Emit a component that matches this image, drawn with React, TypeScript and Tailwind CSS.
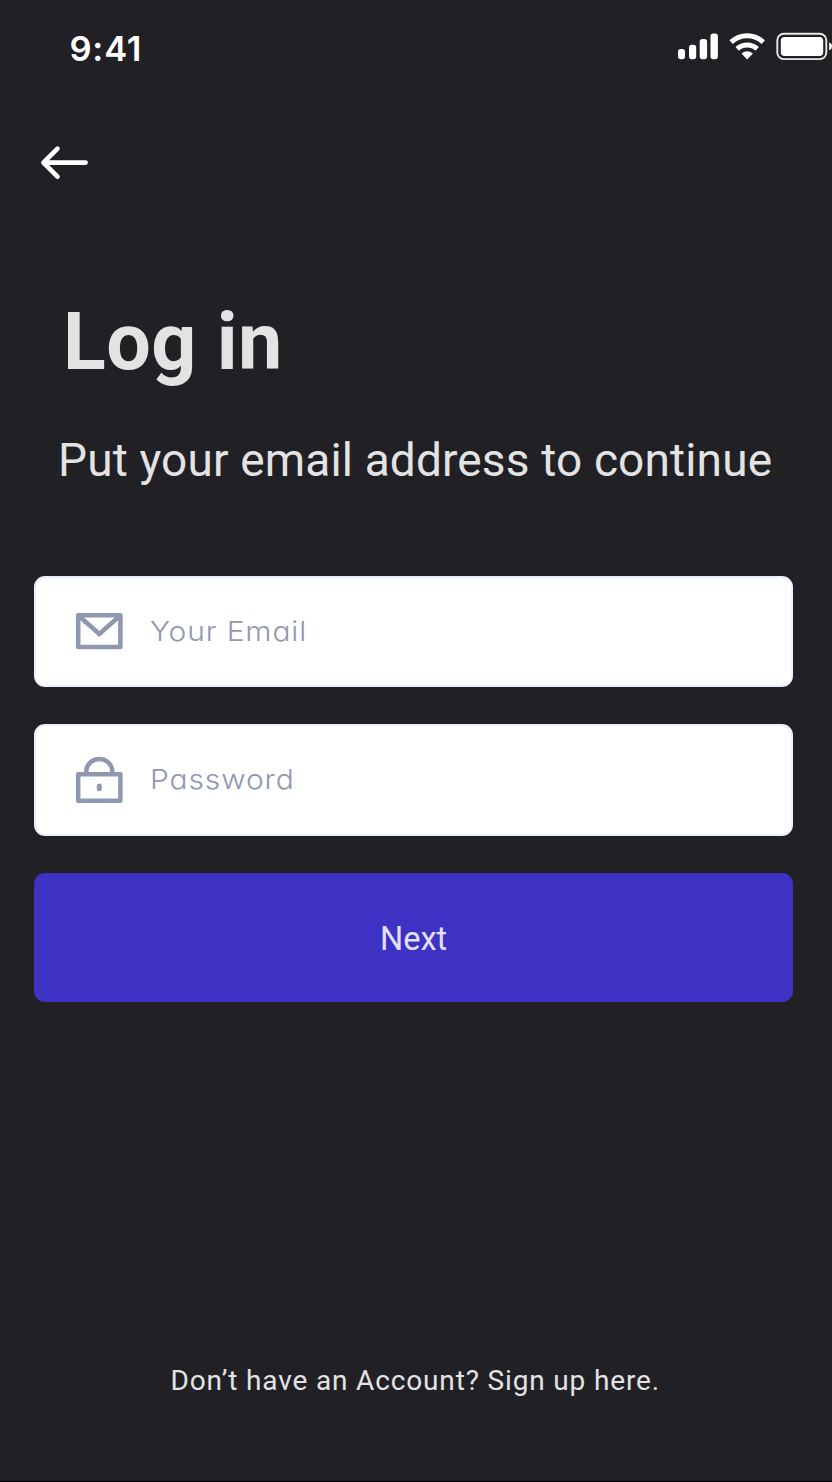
function StatusBar() {
  return (
    <header className="flex h-[96px] shrink-0 items-start justify-between overflow-hidden pl-[69.5px]">
      <time className="mt-[29px] font-['Inter',sans-serif] text-[34.5px] leading-[40px] font-semibold tracking-[0.8px] text-white">9:41</time>
      <div className="mt-[30px] flex">
        <svg className="mr-[10px] h-[32px] w-[42px]" viewBox="0 0 42 32" fill="white" aria-label="Signal">
          <rect x="1" y="19" width="7" height="10.3" rx="2.8" />
          <rect x="12" y="14.8" width="7.2" height="14.5" rx="2.8" />
          <rect x="22.7" y="9" width="7.4" height="20.3" rx="2.8" />
          <rect x="33.5" y="3.6" width="7.4" height="25.7" rx="2.8" />
        </svg>
        <svg className="mr-[10px] h-[32px] w-[37px]" viewBox="0 0 37 32" aria-label="Wi-Fi">
          <g fill="none" stroke="white" strokeWidth="5">
            <path d="M2.1 12.2A23.6 23.6 0 0 1 34.3 12.2" />
            <path d="M8.2 18.8A14.8 14.8 0 0 1 28.2 18.8" />
          </g>
          <path d="M12.5 23.6Q18.2 19 23.9 23.6L18.2 29.5Z" fill="white" />
        </svg>
        <svg className="h-[32px] w-[56px]" viewBox="0 0 56 32" aria-label="Battery">
          <rect x="1.3" y="3.7" width="49" height="25.4" rx="6.5" fill="none" stroke="white" strokeOpacity=".9" strokeWidth="1.9" />
          <rect x="4.8" y="7" width="42.4" height="19" rx="3.8" fill="white" />
          <path d="M53.2 12.6Q56 13.5 56 16.4Q56 19.2 53.2 20.2Z" fill="white" />
        </svg>
      </div>
    </header>
  );
}

function MailIcon() {
  return (
    <svg className="h-[48px] w-[48px] shrink-0" viewBox="0 0 48 48" fill="none" stroke="#9098b1" strokeWidth="4.6" strokeLinejoin="round">
      <rect x="3.2" y="8.3" width="42.2" height="31.7" />
      <path d="M4.5 9.6L24.3 27L44.1 9.6" strokeLinejoin="miter" />
    </svg>
  );
}

function LockIcon() {
  return (
    <svg className="h-[48px] w-[48px] shrink-0" viewBox="0 0 48 48" fill="none" stroke="#9098b1" strokeWidth="4.5" strokeLinejoin="round">
      <rect x="3.2" y="18.2" width="42.2" height="26.6" />
      <path d="M11.3 18V15.4A13 12.4 0 0 1 37.3 15.4V18" />
      <rect x="21.8" y="27.6" width="5" height="7.6" rx="2.3" fill="#9098b1" stroke="none" />
    </svg>
  );
}

function Field({ icon, children }: { icon: React.ReactNode; children: React.ReactNode }) {
  return (
    <label className="flex h-[111.5px] items-center rounded-[11px] border-2 border-[#ebf0ff] bg-white pl-[38.7px]">
      {icon}
      <span className="ml-[27px] origin-left scale-x-[1.09] font-['Inter',sans-serif] text-[27.5px] font-light tracking-[0.8px] text-[#9098b1] [font-feature-settings:'cv11']">
        {children}
      </span>
    </label>
  );
}

export default function App() {
  return (
    <main className="flex h-[1482px] w-[832px] flex-col overflow-hidden border-b border-black bg-[#212025] font-['Roboto',sans-serif] text-[#e3e3e4]">
      <StatusBar />
      <button className="mt-[48px] ml-[40px] h-[37px] w-[49px]" aria-label="Back">
        <svg className="h-[37px] w-[49px]" viewBox="0 0 49 37" fill="none" stroke="white" strokeWidth="4.6" strokeLinecap="round" strokeLinejoin="round">
          <path d="M45.6 18.6H4M17.5 4.7L3.4 18.6L17.5 32.7" />
        </svg>
      </button>
      <h1 className="mt-[121px] ml-[63px] text-[79px] leading-[80px] font-bold tracking-[0.4px] whitespace-nowrap">Log in</h1>
      <p className="mt-[54px] ml-[58px] text-[46px] leading-[48px] tracking-[0.15px] whitespace-nowrap">Put your email address to continue</p>
      <form className="mt-[91.5px] mr-[39px] ml-[34.3px] flex flex-col gap-[37px]">
        <Field icon={<MailIcon />}>Your Email</Field>
        <Field icon={<LockIcon />}>Password</Field>
        <button type="button" className="h-[129.5px] rounded-[11px] bg-[#3d32c4] pt-[4px] text-[32.5px] text-[#e3e0fa]">Next</button>
      </form>
      <p className="mt-[363px] ml-[170.5px] text-[28px] leading-[32px] tracking-[0.85px] whitespace-nowrap">Don’t have an Account? Sign up here.</p>
    </main>
  );
}
